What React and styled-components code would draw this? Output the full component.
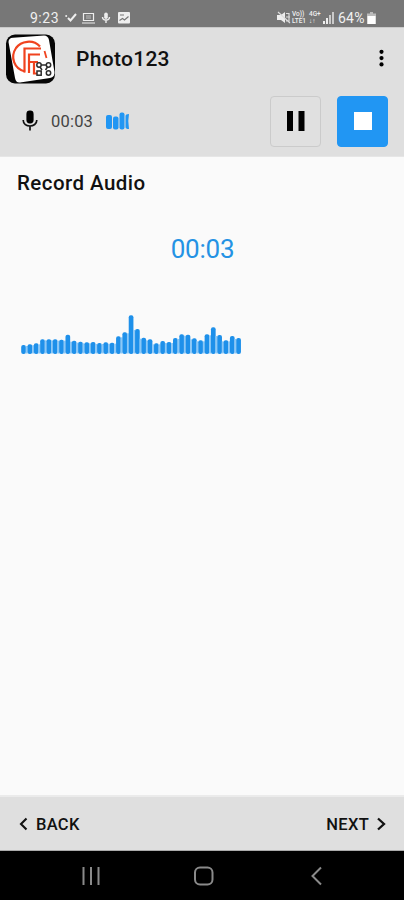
import React from 'react';
import styled, { createGlobalStyle } from 'styled-components';

const GlobalStyle = createGlobalStyle`
  * {
    box-sizing: border-box;
  }
  body {
    margin: 0;
    background: #fafafa;
    font-family: Roboto, "Liberation Sans", sans-serif;
    color: #111;
  }
  svg {
    display: block;
    flex: none;
  }
`;

const Screen = styled.div`
  display: flex;
  flex-direction: column;
  width: 404px;
  height: 900px;
  overflow: hidden;
`;

const StatusBar = styled.div`
  display: flex;
  align-items: center;
  height: 27px;
  flex: none;
  padding: 8px 28px 0 30px;
  background: #777;
  color: #f0f0f0;
  font-size: 14px;
  line-height: 18px;
`;

const Clock = styled.span`
  width: 34px;
  letter-spacing: 0.5px;
`;

const Battery = styled.span`
  letter-spacing: 0.2px;
  margin-left: 3px;
  width: 29px;
`;

const Spacer = styled.div`
  flex: 1;
`;

const Header = styled.div`
  height: 130px;
  flex: none;
  background: #dfdfdf;
  border-top: 1px solid #c9c9c9;
  border-bottom: 1px solid #e6e6e6;
`;

const TitleRow = styled.div`
  display: flex;
  align-items: center;
  height: 61px;
  padding: 0 18px 0 5px;
`;

const Title = styled.div`
  margin-left: 20px;
  font-size: 21px;
  font-weight: 500;
  letter-spacing: 0.3px;
`;

const RecorderRow = styled.div`
  display: flex;
  align-items: center;
  height: 64px;
  padding: 0 16px 0 22px;
`;

const SmallTime = styled.div`
  width: 55px;
  margin-left: 13px;
  font-size: 16.5px;
  letter-spacing: 0.2px;
  color: #444;
`;

const ControlButton = styled.button`
  display: flex;
  align-items: center;
  justify-content: center;
  width: 51px;
  height: 51px;
  padding: 0;
  margin-left: 16px;
  border-radius: 4px;
  border: 1px solid ${props => (props.$primary ? '#2196f3' : '#cbcbcb')};
  background: ${props => (props.$primary ? '#2196f3' : '#e0e0e0')};
`;

const Content = styled.div`
  flex: 1;
  padding: 14px 18px 0 17px;
  background: #fafafa;
`;

const Heading = styled.div`
  font-size: 20.5px;
  line-height: 24px;
  font-weight: 500;
  letter-spacing: 0.45px;
`;

const BigTime = styled.div`
  margin-top: 38px;
  padding-left: 2px;
  font-size: 26px;
  line-height: 32px;
  text-align: center;
  letter-spacing: -0.2px;
  color: #2492e4;
`;

const Footer = styled.div`
  display: flex;
  align-items: center;
  justify-content: space-between;
  height: 56px;
  flex: none;
  padding: 1px 17px 0 18px;
  background: #dfdfdf;
  border-top: 2px solid #ebebeb;
  border-bottom: 1px solid #aaa;
`;

const FooterButton = styled.div`
  display: flex;
  align-items: center;
  gap: 7px;
  font-size: 16.5px;
  font-weight: 500;
  letter-spacing: 0.3px;
`;

const SystemNav = styled.div`
  display: flex;
  align-items: center;
  justify-content: space-between;
  height: 49px;
  flex: none;
  padding: 0 80px 0 81px;
  background: #000;
`;

const levels = [
  9, 9.7, 10.7, 14.7, 14.7, 14.7, 14.3, 19.3, 13.3, 12.3, 11.7, 12, 11, 11.7, 11.3,
  17.7, 21.7, 38.7, 25, 16.3, 14.7, 10.7, 13, 12, 16, 19.7, 19.3, 15.7, 13.7, 19.7,
  26.7, 19, 13.7, 18, 16,
];

const WaveBox = styled.div`
  margin-top: 48px;
  padding-left: 3px;
`;

const Waveform = () => (
  <WaveBox>
    <svg width="224" height="42" viewBox="0 0 224 42">
      {levels.map((level, i) => (
        <g key={i}>
          {i > 0 && (
            <rect
              x={i * 6.325 - 0.6}
              y={42 - Math.min(level, levels[i - 1])}
              width="2"
              height={Math.min(level, levels[i - 1]) - 1.5}
              fill="#8cc8f7"
            />
          )}
          <rect x={1.2 + i * 6.325} y={41 - level} width="4.7" height={level} rx="2" fill="#1e90ea" />
        </g>
      ))}
    </svg>
  </WaveBox>
);

const Logo = () => (
  <svg width="51" height="50" viewBox="0 0 51 50">
    <rect x="1" y="0.5" width="49" height="49" rx="9" fill="#050505" />
    <path d="M3.5 8 Q3.5 4 8 3.8 L39 1.5 Q43 1.5 44 6 L49.5 38 Q50 43 45 44 L15 48.5 Q11 49 10 44Z" fill="#fff" />
    <g fill="none" stroke="#f0431f" strokeWidth="2.2">
      <path d="M35 12.5 C28 5 16 7 11 14 C5 23 9 35 20 37.5" />
      <path d="M19.5 38.5 V14.5 H36" />
      <path d="M24 39 V20.5 H35 M24 28 H33" />
      <path d="M29 28 V39.5 H33" />
      <path d="M39.5 17 L41.5 24" strokeWidth="1.8" />
    </g>
    <g fill="#fff" stroke="#2b2b2b" strokeWidth="1.5">
      <path d="M35.5 31 H41.5 M35 33 L37 36 M42.5 33 L40.5 36" fill="none" />
      <circle cx="34" cy="31" r="2.2" />
      <circle cx="43.5" cy="31" r="2.2" />
      <rect x="32" y="37" width="4.2" height="4.2" />
      <circle cx="43.5" cy="39" r="2.2" />
    </g>
  </svg>
);

const NotificationIcons = () => (
  <svg width="70" height="14" viewBox="0 0 70 14" fill="none" stroke="#eee">
    <path d="M4 7 L6.5 9.5 L12 3" strokeWidth="2" />
    <circle cx="2.2" cy="5" r="1" fill="#eee" stroke="none" />
    <path d="M19.5 2.5 H29.5 V9.5 H19.5Z M18 12 H31" strokeWidth="1.2" />
    <path d="M22 5 H27 M22 7 H27" strokeWidth="1" opacity=".6" />
    <rect x="40.2" y="1.5" width="3.6" height="6.5" rx="1.8" fill="#eee" stroke="none" />
    <path d="M38.5 6 Q38.5 9 42 9 Q45.5 9 45.5 6 M42 9 V12" strokeWidth="1.4" />
    <rect x="54" y="1" width="12" height="11.5" rx="1" fill="#eee" stroke="none" />
    <path d="M55.5 9.5 L58.5 7.5 L60.5 9 L64.5 5.5 M56 4 H60" stroke="#777" strokeWidth="1.2" />
  </svg>
);

const MuteIcon = () => (
  <svg width="14" height="13" viewBox="0 0 14 13">
    <path d="M0 4 H4 L8 1 V12 L4 9 H0Z" fill="#eee" />
    <path d="M1 1 L13 12 M9 2.5 H12 V10 H9 M9 6 H13" fill="none" stroke="#ddd" strokeWidth="1.2" />
  </svg>
);

const NetworkLabel = styled.div`
  display: flex;
  flex-direction: column;
  width: ${props => props.$width}px;
  margin-left: ${props => props.$gap}px;
  font-size: 6.5px;
  line-height: 7px;
  font-weight: 500;
  white-space: nowrap;
`;

const SignalIcon = () => (
  <svg width="12" height="12" viewBox="0 0 12 12" fill="#eee">
    <rect x="0" y="9" width="2" height="3" />
    <rect x="3" y="6" width="2" height="6" />
    <rect x="6" y="3" width="2" height="9" opacity=".7" />
    <rect x="9" y="0" width="2" height="12" opacity=".7" />
  </svg>
);

const BatteryIcon = () => (
  <svg width="9" height="12" viewBox="0 0 9 12">
    <path d="M3 0 H6 V1.5 H9 V12 H0 V1.5 H3Z" fill="#bbb" />
    <rect x="0.5" y="4" width="8" height="8" fill="#fff" />
  </svg>
);

const MicIcon = () => (
  <svg width="16" height="22" viewBox="0 0 16 22">
    <rect x="4.4" y="0.5" width="7.2" height="13" rx="3.4" fill="#000" />
    <path d="M1.2 10 C1.2 18 14.8 18 14.8 10 M8 16 V20.5" fill="none" stroke="#111" strokeWidth="1.7" />
  </svg>
);

const MiniBars = () => (
  <svg width="24" height="20" viewBox="0 0 24 20" fill="#2196f3">
    <rect x="0" y="4" width="6" height="14" rx="2" />
    <rect x="7" y="5.5" width="5.5" height="13" rx="2" />
    <rect x="13.5" y="1.5" width="5" height="17" rx="2" />
    <path d="M23 3 Q19.5 3 19.5 5 V16 Q19.5 18 23 18 Q21.5 10 23 3Z" />
  </svg>
);

const App = () => {
  return (
    <>
      <GlobalStyle />
      <Screen>
        <StatusBar>
          <Clock>9:23</Clock>
          <NotificationIcons />
          <Spacer />
          <MuteIcon />
          <NetworkLabel $width={16} $gap={1}>
            <span>Vo))</span>
            <span>LTE1</span>
          </NetworkLabel>
          <NetworkLabel $width={14} $gap={1}>
            <span>4G+</span>
            <span>↓↑</span>
          </NetworkLabel>
          <SignalIcon />
          <Battery>64%</Battery>
          <BatteryIcon />
        </StatusBar>

        <Header>
          <TitleRow>
            <Logo />
            <Title>Photo123</Title>
            <Spacer />
            <svg width="9" height="20" viewBox="0 0 9 20">
              <circle cx="4.5" cy="2.8" r="2.1" />
              <circle cx="4.5" cy="9.1" r="2.1" />
              <circle cx="4.5" cy="15.4" r="2.1" />
            </svg>
          </TitleRow>
          <RecorderRow>
            <MicIcon />
            <SmallTime>00:03</SmallTime>
            <MiniBars />
            <Spacer />
            <ControlButton>
              <svg width="18" height="20" viewBox="0 0 18 20">
                <rect x="0" y="0" width="6" height="20" />
                <rect x="11.5" y="0" width="6" height="20" />
              </svg>
            </ControlButton>
            <ControlButton $primary>
              <svg width="18" height="18" viewBox="0 0 18 18">
                <rect width="18" height="18" fill="#fff" />
              </svg>
            </ControlButton>
          </RecorderRow>
        </Header>

        <Content>
          <Heading>Record Audio</Heading>
          <BigTime>00:03</BigTime>
          <Waveform />
        </Content>

        <Footer>
          <FooterButton>
            <svg width="11" height="14" viewBox="0 0 11 14" fill="none" stroke="#111" strokeWidth="2.1">
              <path d="M8.5 1.5 L3 7 L8.5 12.5" />
            </svg>
            BACK
          </FooterButton>
          <FooterButton>
            NEXT
            <svg width="11" height="14" viewBox="0 0 11 14" fill="none" stroke="#111" strokeWidth="2.3">
              <path d="M2 1.5 L8 7 L2 12.5" />
            </svg>
          </FooterButton>
        </Footer>

        <SystemNav>
          <svg width="20" height="20" viewBox="0 0 20 20" fill="#8a8a8a">
            <rect x="1.5" y="1" width="2" height="18" />
            <rect x="9" y="1" width="2" height="18" />
            <rect x="16.5" y="1" width="2" height="18" />
          </svg>
          <svg width="20" height="20" viewBox="0 0 20 20" fill="none" stroke="#8a8a8a" strokeWidth="2">
            <rect x="1" y="1.5" width="17.5" height="17" rx="5" />
          </svg>
          <svg width="18" height="20" viewBox="0 0 18 20" fill="none" stroke="#8a8a8a" strokeWidth="2">
            <path d="M15 1.5 L6.5 10 L15 18.5" />
          </svg>
        </SystemNav>
      </Screen>
    </>
  );
};

export default App;
